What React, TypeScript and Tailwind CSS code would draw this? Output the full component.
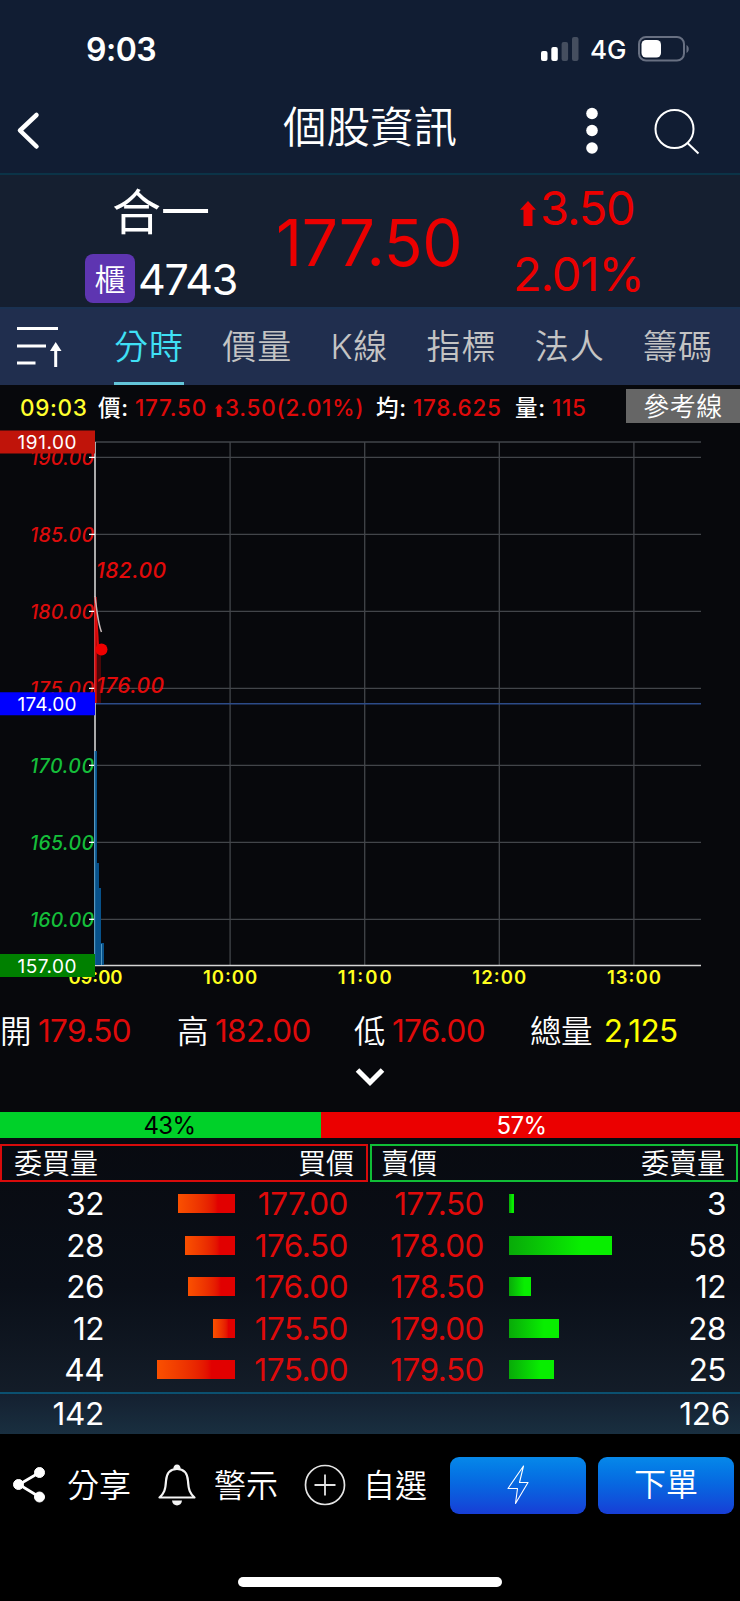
import type { ReactNode } from 'react'

type OrderLevel = { price: string; volume: number; bar: number }

const TABS = ['分時', '價量', 'K線', '指標', '法人', '籌碼']

const BIDS: OrderLevel[] = [
  { price: '177.00', volume: 32, bar: 57 },
  { price: '176.50', volume: 28, bar: 50 },
  { price: '176.00', volume: 26, bar: 47 },
  { price: '175.50', volume: 12, bar: 22 },
  { price: '175.00', volume: 44, bar: 78 },
]

const ASKS: OrderLevel[] = [
  { price: '177.50', volume: 3, bar: 5 },
  { price: '178.00', volume: 58, bar: 103 },
  { price: '178.50', volume: 12, bar: 22 },
  { price: '179.00', volume: 28, bar: 50 },
  { price: '179.50', volume: 25, bar: 45 },
]

// chart geometry, relative to the chart's own top left corner
const CHART_LEFT = 95
const CHART_RIGHT = 701
const CHART_TOP = 17
const CHART_BOTTOM = 540.5
const PRICE_TICKS = [190, 185, 180, 175, 170, 165, 160]
const TIME_TICKS = ['09:00', '10:00', '11:00', '12:00', '13:00']

function priceY(price: number): number {
  return CHART_TOP + ((191 - price) * (CHART_BOTTOM - CHART_TOP)) / 34
}

function timeX(index: number): number {
  return CHART_LEFT + 0.5 + index * 134.6
}

function UpArrow({ className }: { className: string }) {
  return (
    <svg viewBox="0 0 16 26" className={className} fill="currentColor" preserveAspectRatio="none" aria-hidden>
      <path d="M8 0L16 9H12.5V26H3.5V9H0z" />
    </svg>
  )
}

function StatusBar() {
  return (
    <div className="flex h-[98px] items-center pl-[86px] font-semibold text-white">
      <span className="mt-0.5 w-[455px] text-[32px] leading-none tracking-[-0.500px]">9:03</span>
      <svg width="38" height="24" viewBox="0 0 38 24" className="fill-white" aria-hidden>
        <rect x="0" y="14" width="6.5" height="10" rx="2" />
        <rect x="10.3" y="10" width="6.5" height="14" rx="2" />
        <rect x="20.6" y="5" width="6.5" height="19" rx="2" opacity=".22" />
        <rect x="31" y="0" width="6.5" height="24" rx="2" opacity=".22" />
      </svg>
      <span className="mt-0.5 ml-[11px] w-12 text-[26px] leading-none font-medium">4G</span>
      <svg width="52" height="26" viewBox="0 0 52 26" fill="none" aria-hidden>
        <rect x="1" y="1" width="45" height="23.5" rx="7" stroke="#687082" strokeWidth="2" />
        <rect x="3.5" y="4" width="19.5" height="17.5" rx="4.5" fill="#fff" />
        <path d="M48.5 9c3 1.500 3 6.500 0 8z" fill="#687082" />
      </svg>
    </div>
  )
}

function TitleBar() {
  return (
    <div className="flex h-[75px] text-white">
      <svg width="283" height="75" viewBox="0 0 283 75" fill="none" stroke="currentColor" strokeWidth="4.500" aria-hidden>
        <path d="M36.500 17L20 32.500L36.500 48.500" strokeLinecap="round" strokeLinejoin="round" />
      </svg>
      <h1 className="mt-2 w-[297px] text-[43.500px] leading-none font-[350]">個股資訊</h1>
      <svg width="24" height="75" viewBox="0 0 24 75" fill="currentColor" aria-hidden>
        <circle cx="12" cy="15.500" r="5.800" />
        <circle cx="12" cy="32.500" r="5.800" />
        <circle cx="12" cy="50" r="5.800" />
      </svg>
      <svg width="60" height="75" viewBox="0 0 60 75" className="ml-[46px]" fill="none" stroke="currentColor" strokeWidth="2" aria-hidden>
        <circle cx="24.500" cy="31" r="19" />
        <path d="M37.500 45L48.500 55.500" />
      </svg>
    </div>
  )
}

function StockSummary() {
  return (
    <section className="flex h-[134px] border-t-2 border-[#0b3347] bg-[#151f30]">
      <div className="w-[276px] text-white">
        <div className="mt-[13px] pl-[112px] text-[49px] leading-none">合一</div>
        <div className="mt-[17px] flex items-center pl-[85px]">
          <span className="flex h-[49px] w-[50px] items-center justify-center rounded-lg bg-[#5e35b1] pt-0.5 text-[31px] leading-none font-[350]">
            櫃
          </span>
          <span className="mt-px ml-[3px] text-[43px] leading-none tracking-[-1.200px]">4743</span>
        </div>
      </div>
      <div className="mt-9 w-[237px] text-[64px] leading-none tracking-[-0.400px] text-[#eb0000]">177.50</div>
      <div className="text-[47px] leading-none tracking-[-1.100px] text-[#eb0000]">
        <div className="mt-[9px] flex items-center pl-[7px]">
          <UpArrow className="mt-[11px] mr-1 h-[25px] w-4" />
          3.50
        </div>
        <div className="mt-[19px]">2.01%</div>
      </div>
    </section>
  )
}

function TabBar() {
  return (
    <nav className="flex h-[78px] border-t-2 border-[#1a3151] bg-[#202e4e] pr-[27px]">
      <svg width="114" height="76" viewBox="0 2 114 76" fill="none" stroke="#fff" strokeWidth="3" aria-hidden>
        <path d="M17 21.500H58M17 39H46M17 56H35.500M55.700 42V60" />
        <path d="M50 44L55.700 35L61.500 44z" fill="#fff" stroke="none" />
      </svg>
      <div className="flex flex-1 justify-between">
        {TABS.map((tab, i) => (
          <button
            key={tab}
            type="button"
            className={`h-[76px] border-b-[3px] pt-0.5 text-[34px] leading-none font-[350] tracking-[1px] whitespace-nowrap ${
              i === 0 ? 'border-[#63c5d9] text-[#3fe0f5]' : 'border-transparent text-[#c4c4c4]'
            }`}
          >
            {tab}
          </button>
        ))}
      </div>
    </nav>
  )
}

function QuoteLine() {
  return (
    <div className="flex h-10 pl-5 text-[22.500px] leading-none font-medium tracking-[0.700px] whitespace-nowrap text-[#dd0a0a]">
      <div className="flex w-[606px] items-center pt-[7px]">
        <span className="w-[78px] text-[#ffff2e]">09:03</span>
        <span className="w-[37px] text-white">價:</span>
        <span className="w-[80px]">177.50</span>
        <UpArrow className="mt-1 mr-0.5 h-[13px] w-2" />
        <span className="w-[151px]">3.50(2.01%)</span>
        <span className="w-[37px] text-white">均:</span>
        <span className="w-[102px]">178.625</span>
        <span className="w-[37px] text-white">量:</span>
        <span>115</span>
      </div>
      <button
        type="button"
        className="mt-1 flex h-[34px] w-[114px] items-center justify-center bg-[#666] pt-0.5 text-[26px] leading-none font-[350] tracking-[0.500px] text-white"
      >
        參考線
      </button>
    </div>
  )
}

function PriceBadge({ y, fill, label }: { y: number; fill: string; label: string }) {
  return (
    <g>
      <rect x="0" y={y - 11.5} width="95" height="23" fill={fill} />
      <text x="17.500" y={y + 7} fontSize="19" fill="#fff" textLength="59">
        {label}
      </text>
    </g>
  )
}

function IntradayChart() {
  return (
    <svg width="740" height="570" viewBox="0 0 740 570" className="block" aria-label="分時走勢">
      <g stroke="#42454a" strokeWidth="1.300">
        <path d={`M${CHART_LEFT} ${CHART_TOP}H${CHART_RIGHT}`} />
        {PRICE_TICKS.map((p) => (
          <path key={p} d={`M${CHART_LEFT} ${priceY(p)}H${CHART_RIGHT}`} />
        ))}
        {TIME_TICKS.slice(1).map((t, i) => (
          <path key={t} d={`M${timeX(i + 1)} ${CHART_TOP}V${CHART_BOTTOM}`} />
        ))}
      </g>
      <path d={`M${CHART_LEFT} ${priceY(174)}H${CHART_RIGHT}`} stroke="#2c4b88" strokeWidth="1.500" />

      <path d={`M${CHART_LEFT} ${CHART_TOP}V${CHART_BOTTOM}`} stroke="#d4d4d4" strokeWidth="1.600" />
      <path d={`M${CHART_LEFT} ${CHART_BOTTOM}H${CHART_RIGHT}`} stroke="#d4d4d4" strokeWidth="1.400" />

      <g fontStyle="italic" fontWeight="500" fontSize="19.500">
        {PRICE_TICKS.map((p) => (
          <text key={p} x="30" y={priceY(p) + 7.5} fill={p > 174 ? '#dc0c0c' : '#15be3a'} textLength="64">
            {p.toFixed(2)}
          </text>
        ))}
      </g>
      <g stroke="#fff" strokeWidth="1.300">
        {PRICE_TICKS.map((p) => (
          <path key={p} d={`M89 ${priceY(p)}H95`} />
        ))}
      </g>

      {/* volume */}
      <path d="M94.500 326H97V438H99V463H101V518H104V540H94.500z" fill="#07518a" />
      <path d="M94.700 326V540M101.500 519V540" stroke="#5aa0c8" strokeWidth=".900" />

      {/* price */}
      <path d="M95 176L98 225L101 230V278H95z" fill="#4b0708" />
      <path d="M95.500 172V278" stroke="#d80a0c" strokeWidth="2.400" />
      <path d="M95.500 178L98.500 228" stroke="#e00b0b" strokeWidth="2" />
      <path d="M95 171C96.500 183 98 199 101.500 207" stroke="#c8baba" strokeWidth="1.500" fill="none" />
      <circle cx="101.500" cy="224.500" r="6" fill="#f00000" />
      <g fontStyle="italic" fontWeight="500" fontSize="21" fill="#e20a0a">
        <text x="96" y="153" textLength="70">182.00</text>
        <text x="96" y="268" textLength="68">176.00</text>
      </g>

      <g fontSize="18.500" fontWeight="600" fill="#ffff1e" textAnchor="middle">
        {TIME_TICKS.map((t, i) => (
          <text key={t} x={timeX(i)} y="559" textLength="54">
            {t}
          </text>
        ))}
      </g>

      <PriceBadge y={CHART_TOP} fill="#c0140a" label="191.00" />
      <PriceBadge y={priceY(174)} fill="#0000ff" label="174.00" />
      <PriceBadge y={CHART_BOTTOM} fill="#008000" label="157.00" />
    </svg>
  )
}

function DayStat({ label, className, children }: { label: string; className: string; children: ReactNode }) {
  return (
    <span className={`flex ${className}`}>
      <span className="mt-px mr-[7px] font-[350] text-white">{label}</span>
      {children}
    </span>
  )
}

function DayStats() {
  return (
    <section className="h-[117px]">
      <div className="flex pt-5 text-[31.500px] leading-none tracking-[-0.600px] whitespace-nowrap text-[#df0a0a]">
        <DayStat label="開" className="w-[177px]">179.50</DayStat>
        <DayStat label="高" className="w-[177px]">182.00</DayStat>
        <DayStat label="低" className="w-[176px]">176.00</DayStat>
        <DayStat label="總量" className="gap-[5px] text-[#ffff00]">2,125</DayStat>
      </div>
      <svg width="32" height="22" viewBox="0 0 32 22" className="mx-auto mt-[18px]" fill="none" stroke="#fff" strokeWidth="5" aria-hidden>
        <path d="M3.500 4L16 16.500L28.500 4" />
      </svg>
    </section>
  )
}

function RatioBar() {
  return (
    <div className="flex h-[26px] text-[24px] leading-[28px] tracking-[-0.600px]">
      <div className="w-[321px] bg-[#00d129] pl-[18px] text-center text-black">43%</div>
      <div className="flex-1 bg-[#eb0000] pr-[18px] text-center text-white">57%</div>
    </div>
  )
}

function OrderBook() {
  return (
    <section className="bg-linear-to-b from-[#080a10] via-[#0a0f18] to-[#17222f] text-[31.500px] leading-none text-white">
      <div className="flex gap-0.5 pt-[6px] pr-0.5 text-[28px] font-[350]">
        <div className="flex h-[38px] w-[368px] items-center justify-between border-2 border-[#d80b0b] px-3 pt-0.5">
          <span>委買量</span>
          <span>買價</span>
        </div>
        <div className="flex h-[38px] w-[368px] items-center justify-between border-2 border-[#10bd36] pt-0.5 pr-[11px] pl-[9px]">
          <span>賣價</span>
          <span>委賣量</span>
        </div>
      </div>
      <div className="flex pt-px pb-px tracking-[-0.500px]">
        <div className="w-[370px]">
          {BIDS.map((level) => (
            <div key={level.price} className="flex h-[41.500px] items-center">
              <span className="w-[104px] text-right">{level.volume}</span>
              <span className="flex w-[131px] justify-end">
                <span className="h-[19px] bg-linear-to-r from-[#fa5000] to-[#e10000] to-70%" style={{ width: level.bar }} />
              </span>
              <span className="w-[113px] text-right text-[#df0a0a]">{level.price}</span>
            </div>
          ))}
        </div>
        <div className="flex-1">
          {ASKS.map((level) => (
            <div key={level.price} className="flex h-[41.500px] items-center">
              <span className="w-[114px] text-right text-[#df0a0a]">{level.price}</span>
              <span className="ml-[25px] h-[19px] bg-linear-to-r from-[#08aa08] to-[#08ee00] to-70%" style={{ width: level.bar }} />
              <span className="mr-[14px] ml-auto">{level.volume}</span>
            </div>
          ))}
        </div>
      </div>
      <div className="flex h-[42px] items-center justify-between border-t-2 border-[#0b5070] bg-linear-to-b from-[#142030] to-[#192f40] pt-px pr-[10px] tracking-[-0.300px]">
        <span className="w-[104px] text-right">142</span>
        <span>126</span>
      </div>
    </section>
  )
}

function ActionBar() {
  return (
    <footer className="h-[169px] bg-black">
      <div className="flex items-center pt-[23px] text-[32px] leading-none font-[350] whitespace-nowrap text-white">
        <svg width="67" height="46" viewBox="0 0 67 46" fill="#fff" stroke="#fff" aria-hidden>
          <path d="M39.500 10.500L19 22.500L39.500 35" fill="none" strokeWidth="2.800" />
          <circle cx="39.500" cy="10.500" r="5" />
          <circle cx="18.500" cy="22.500" r="5" />
          <circle cx="39.500" cy="35" r="5" />
        </svg>
        <span className="w-[90px] pt-0.5">分享</span>
        <svg width="40" height="46" viewBox="0 0 40 46" fill="none" stroke="#f4f4f4" strokeWidth="2.200" aria-hidden>
          <path d="M2.500 35.500C7 31.500 8.500 28 9 19C9.500 11 13.500 7 20 7S30.500 11 31 19C31.500 28 33 31.500 37.500 35.500z" strokeLinejoin="round" />
          <path d="M17.500 7C17 2.500 23 2.500 22.500 7z" fill="#f4f4f4" />
          <path d="M15 38.500H25C24.500 45 15.500 45 15 38.500z" fill="#f4f4f4" stroke="none" />
        </svg>
        <span className="ml-[17px] w-[90px] pt-0.5">警示</span>
        <svg width="42" height="42" viewBox="0 0 42 42" fill="none" stroke="#e4e4e4" strokeWidth="1.700" aria-hidden>
          <circle cx="21" cy="21" r="19.500" />
          <path d="M10.500 21H31.500M21 10.500V31.500" strokeWidth="1.800" />
        </svg>
        <span className="ml-[17px] w-[87px] pt-0.5">自選</span>
        <button
          type="button"
          aria-label="閃電下單"
          className="flex h-[57px] w-[136px] items-center justify-center rounded-[9px] bg-linear-to-b from-[#0788e9] to-[#173dd6]"
        >
          <svg width="24" height="42" viewBox="0 0 24 42" fill="none" stroke="#fff" strokeWidth="1.100" strokeLinejoin="round" aria-hidden>
            <path d="M17.500 2L2 24.500H11.500L9.500 39.500L22 18.500H13.500z" />
          </svg>
        </button>
        <button
          type="button"
          className="ml-3 h-[57px] w-[136px] rounded-[9px] bg-linear-to-b from-[#0788e9] to-[#173dd6] text-[32px] leading-none font-[350]"
        >
          下單
        </button>
      </div>
      <div className="mx-auto mt-[63px] h-[10px] w-[264px] rounded-full bg-white" />
    </footer>
  )
}

export default function App() {
  return (
    <main className="h-[1601px] w-[740px] overflow-hidden bg-[#07080c] font-['Inter','Noto_Sans_CJK_TC',sans-serif]">
      <header className="bg-[#111d33]">
        <StatusBar />
        <TitleBar />
      </header>
      <StockSummary />
      <TabBar />
      <QuoteLine />
      <IntradayChart />
      <DayStats />
      <RatioBar />
      <OrderBook />
      <ActionBar />
    </main>
  )
}
